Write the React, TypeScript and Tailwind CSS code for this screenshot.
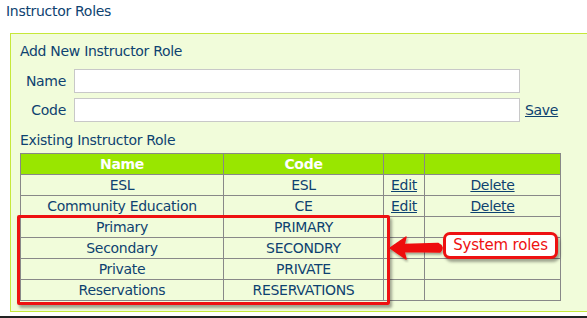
import React from "react";

const rows = [
  { name: "ESL", code: "ESL", actions: true },
  { name: "Community Education", code: "CE", actions: true },
  { name: "Primary", code: "PRIMARY", actions: false },
  { name: "Secondary", code: "SECONDRY", actions: false },
  { name: "Private", code: "PRIVATE", actions: false },
  { name: "Reservations", code: "RESERVATIONS", actions: false },
];

export default function App() {
  return (
    <div
      className="relative w-[587px] h-[318px] overflow-hidden bg-white text-[14px] text-[#0e4270]"
      style={{ fontFamily: '"DejaVu Sans", Verdana, sans-serif' }}
    >
      <div className="pl-[6px] pt-[3px] h-[33px] leading-[17px] tracking-[-0.3px]">Instructor Roles</div>
      <div className="ml-[10px] w-[600px] h-[279px] border border-[#c6e83a] bg-[#f1fcda] pl-[9px] pt-[8px]">
        <div className="leading-[18px] h-[27px] tracking-[-0.3px]">Add New Instructor Role</div>
        <div className="flex items-center h-[24px]">
          <div className="w-[46px] text-right tracking-[-0.3px]">Name</div>
          <div className="ml-[8px] w-[446px] h-[24px] border border-[#c8c8c8] bg-white" />
        </div>
        <div className="flex items-center h-[24px] mt-[5px]">
          <div className="w-[46px] text-right tracking-[-0.3px]">Code</div>
          <div className="ml-[8px] w-[446px] h-[24px] border border-[#c8c8c8] bg-white" />
          <a className="ml-[5px] underline cursor-pointer tracking-[-0.3px]">Save</a>
        </div>
        <div className="mt-[9px] leading-[18px] h-[22px] tracking-[-0.3px]">Existing Instructor Role</div>
        <table className="border-collapse border border-[#888] w-[540px] table-fixed tracking-[-0.3px]">
          <colgroup>
            <col className="w-[203px]" />
            <col className="w-[160px]" />
            <col className="w-[41px]" />
            <col className="w-[136px]" />
          </colgroup>
          <thead>
            <tr className="bg-[#99e600] h-[21px]">
              <th className="border border-[#888] text-white font-bold p-0 leading-[17px]">Name</th>
              <th className="border border-[#888] text-white font-bold p-0 leading-[17px]">Code</th>
              <th className="border border-[#888] p-0"></th>
              <th className="border border-[#888] p-0"></th>
            </tr>
          </thead>
          <tbody>
            {rows.map((r) => (
              <tr key={r.name} className="h-[21px]">
                <td className="border border-[#888] text-center p-0 leading-[17px]">{r.name}</td>
                <td className="border border-[#888] text-center p-0 leading-[17px]">{r.code}</td>
                <td className="border border-[#888] text-center p-0 leading-[17px]">
                  {r.actions ? <a className="underline">Edit</a> : null}
                </td>
                <td className="border border-[#888] text-center p-0 leading-[17px]">
                  {r.actions ? <a className="underline">Delete</a> : null}
                </td>
              </tr>
            ))}
          </tbody>
        </table>
      </div>
      <div className="absolute left-0 bottom-0 w-full h-[2px] bg-[#222]" />

      {/* red highlight box */}
      <div className="absolute left-[17px] top-[215px] w-[373px] h-[90px] border-[3px] border-[#ee1111] rounded-[2px] shadow-[2px_3px_3px_rgba(0,0,0,0.35)]" />

      {/* arrow */}
      <svg className="absolute left-[388px] top-[235px]" width="60" height="28" viewBox="0 0 60 28">
        <defs>
          <filter id="sh" x="-20%" y="-20%" width="140%" height="160%">
            <feDropShadow dx="1" dy="2" stdDeviation="1" floodColor="#000" floodOpacity="0.35" />
          </filter>
        </defs>
        <path
          d="M2 13 L18 2 L16 9.5 L50 8.5 Q57 12 52 17 L16 16.5 L18 24 Z"
          fill="#ee1111"
          stroke="#ee1111"
          strokeWidth="1.5"
          strokeLinejoin="round"
          filter="url(#sh)"
        />
      </svg>

      {/* callout */}
      <div className="absolute left-[443px] top-[232px] w-[115px] h-[27px] border-[3px] border-[#ee1111] rounded-[7px] bg-white text-[#ee1111] text-[15px] flex items-center justify-center leading-none tracking-[-0.2px] shadow-[2px_3px_3px_rgba(0,0,0,0.35)]">
        System roles
      </div>
    </div>
  );
}
